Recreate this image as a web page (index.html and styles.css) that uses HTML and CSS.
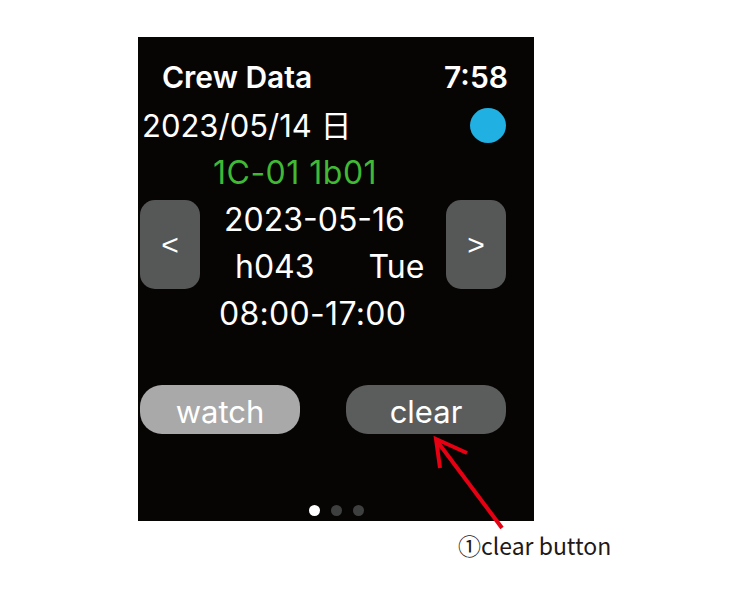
FILE: index.html
```html
<!DOCTYPE html>
<html lang="ja">
<head>
  <meta charset="UTF-8" />
  <title>Crew Data</title>
  <link rel="stylesheet" href="styles.css">
</head>
<body>
  <div class="page">
    <div class="screen">
      <div class="top">
        <span class="title">Crew Data</span>
        <span class="clock">7:58</span>
      </div>
      <div class="row row-date">
        <span>2023/05/14 日</span>
        <span class="status"></span>
      </div>
      <div class="row row-crew">1C-01 1b01</div>
      <div class="nav">
        <button class="arrow">&lt;</button>
        <div class="day">
          <div class="day-date">2023-05-16</div>
          <div class="day-code"><span>h043</span><span>Tue</span></div>
        </div>
        <button class="arrow">&gt;</button>
      </div>
      <div class="row row-time">08:00-17:00</div>
      <div class="actions">
        <button class="pill pill-watch">watch</button>
        <button class="pill pill-clear">clear</button>
      </div>
      <div class="dots">
        <span class="dot on"></span>
        <span class="dot"></span>
        <span class="dot"></span>
      </div>
    </div>
    <div class="caption">①clear button</div>

    <svg class="pointer" width="750" height="600" viewBox="0 0 750 600">
      <line x1="502" y1="528" x2="437" y2="441" />
      <polyline points="440,468 436,439 467,453" />
    </svg>
  </div>
</body>
</html>
```

FILE: styles.css
```css
body { margin: 0; background: #fff; font-family: Inter, "Liberation Sans", "Noto Sans CJK JP", sans-serif; }
.page { position: relative; width: 750px; height: 600px; padding: 37px 0 0 138px; box-sizing: border-box; }
.screen {
  width: 396px;
  height: 484px;
  background: #070404;
  color: #fff;
  box-sizing: border-box;
  padding-top: 22px;
}
.top {
  display: flex;
  justify-content: space-between;
  padding: 0 26px 0 24px;
  font-size: 30px;
  font-weight: 600;
  line-height: 36px;
  height: 36px;
  margin-bottom: 7px;
}
.row { font-size: 32px; line-height: 47px; height: 47px; }
.row-date { display: flex; justify-content: space-between; align-items: center; padding: 0 28px 0 4px; font-size: 31px; }
.status { width: 36px; height: 35px; border-radius: 50%; background: #20b0e2; }
.row-crew { color: #40b935; padding-left: 75px; letter-spacing: 0.5px; }
.nav { display: flex; align-items: flex-start; padding: 0 28px 0 2px; height: 94px; }
.arrow {
  width: 60px;
  height: 89px;
  margin-top: 4px;
  border: none;
  border-radius: 15px;
  background: #555857;
  color: #fff;
  font-family: "Liberation Sans", sans-serif;
  font-size: 30px;
  padding: 0;
}
.day { flex: 1; font-size: 32px; line-height: 47px; }
.day-date { padding-left: 24px; }
.day-code { display: flex; gap: 54px; padding-left: 35px; }
.row-time { padding-left: 81px; letter-spacing: 0.3px; }
.actions { display: flex; justify-content: space-between; padding: 0 28px 0 2px; margin-top: 48px; }
.pill {
  width: 160px;
  height: 49px;
  border: none;
  border-radius: 22px;
  color: #fff;
  font-family: Inter, "Liberation Sans", sans-serif;
  font-size: 31px;
  padding: 4px 0 0;
}
.pill-watch { background: #a9a9a9; }
.pill-clear { background: #5b5d5c; }
.dots { display: flex; justify-content: center; gap: 11px; margin-top: 71px; }
.dot { width: 11px; height: 11px; border-radius: 50%; background: #3e403f; }
.dot.on { background: #fff; }
.caption {
  margin: 10px 0 0 320px;
  font-family: "Noto Sans CJK JP", "Noto Sans", sans-serif;
  font-size: 23px;
  line-height: 28px;
  color: #231815;
}
.pointer { position: absolute; left: 0; top: 0; }
.pointer line, .pointer polyline { stroke: #e60012; stroke-width: 4; fill: none; }
```
